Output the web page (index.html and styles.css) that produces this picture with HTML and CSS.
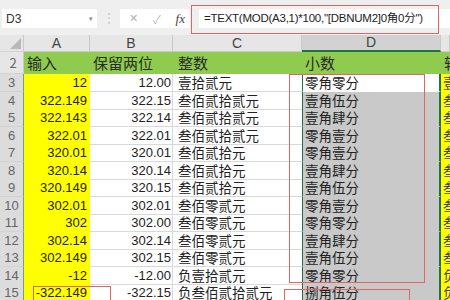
FILE: index.html
```html
<!DOCTYPE html>
<html lang="zh-CN">
<head>
    <meta charset="UTF-8">
    <title>TEXT DBNUM2</title>
    <link rel="stylesheet" href="styles.css">
</head>
<body>
    <div class="page">
        <!-- Formula bar -->
        <div class="toolbar">
            <div class="name-box">D3<span class="drop">&#9662;</span></div>
            <div class="grip">&#8942;</div>
            <div class="fx-box">
                <span class="fx-cancel">&#10005;</span>
                <span class="fx-ok">&#10003;</span>
                <span class="fx">fx</span>
            </div>
            <div class="formula">=TEXT(MOD(A3,1)*100,"[DBNUM2]0角0分")</div>
        </div>

        <!-- Grid -->
        <div class="sheet">
            <div class="row col-head">
                <div class="corner"><span class="corner-mark"></span></div>
                <div>A</div>
                <div>B</div>
                <div>C</div>
                <div class="picked">D</div>
                <div></div>
            </div>
            <div class="row title-row">
                <div>2</div>
                <div>输入</div>
                <div>保留两位</div>
                <div>整数</div>
                <div>小数</div>
                <div>转</div>
            </div>
            <div class="row data active">
                <div>3</div><div>12</div><div>12.00</div><div>壹拾贰元</div><div>零角零分</div><div>壹</div>
            </div>
            <div class="row data">
                <div>4</div><div>322.149</div><div>322.15</div><div>叁佰贰拾贰元</div><div>壹角伍分</div><div>叁</div>
            </div>
            <div class="row data">
                <div>5</div><div>322.143</div><div>322.14</div><div>叁佰贰拾贰元</div><div>壹角肆分</div><div>叁</div>
            </div>
            <div class="row data">
                <div>6</div><div>322.01</div><div>322.01</div><div>叁佰贰拾贰元</div><div>零角壹分</div><div>叁</div>
            </div>
            <div class="row data">
                <div>7</div><div>320.01</div><div>320.01</div><div>叁佰贰拾元</div><div>零角壹分</div><div>叁</div>
            </div>
            <div class="row data">
                <div>8</div><div>320.14</div><div>320.14</div><div>叁佰贰拾元</div><div>壹角肆分</div><div>叁</div>
            </div>
            <div class="row data">
                <div>9</div><div>320.149</div><div>320.15</div><div>叁佰贰拾元</div><div>壹角伍分</div><div>叁</div>
            </div>
            <div class="row data">
                <div>10</div><div>302.01</div><div>302.01</div><div>叁佰零贰元</div><div>零角壹分</div><div>叁</div>
            </div>
            <div class="row data">
                <div>11</div><div>302</div><div>302.00</div><div>叁佰零贰元</div><div>零角零分</div><div>叁</div>
            </div>
            <div class="row data">
                <div>12</div><div>302.14</div><div>302.14</div><div>叁佰零贰元</div><div>壹角肆分</div><div>叁</div>
            </div>
            <div class="row data">
                <div>13</div><div>302.149</div><div>302.15</div><div>叁佰零贰元</div><div>壹角伍分</div><div>叁</div>
            </div>
            <div class="row data">
                <div>14</div><div>-12</div><div>-12.00</div><div>负壹拾贰元</div><div>零角零分</div><div>负</div>
            </div>
            <div class="row data">
                <div>15</div><div>-322.149</div><div>-322.15</div><div>负叁佰贰拾贰元</div><div>捌角伍分</div><div>负</div>
            </div>
        </div>

        <!-- red annotation boxes drawn over the sheet -->
        <div class="mark mark-formula"></div>
        <div class="mark mark-decimal"></div>
        <div class="mark mark-last"></div>
        <div class="mark mark-input"></div>
    </div>
</body>
</html>
```

FILE: styles.css
```css
* {
    box-sizing: border-box;
}

body {
    margin: 0;
    background: #fff;
    font-family: "Liberation Sans", "Noto Sans CJK SC", sans-serif;
    color: #222;
}

.page {
    position: relative;
    width: 450px;
    height: 300px;
    overflow: hidden;
}

/* formula bar */
.toolbar {
    height: 35px;
    background: #efefef;
    display: flex;
    align-items: flex-start;
    padding-top: 9px;
}

.name-box {
    margin-left: 2px;
    width: 95px;
    height: 19px;
    background: #fff;
    display: flex;
    justify-content: space-between;
    align-items: center;
    padding: 0 4px 0 4px;
    font-size: 12px;
    color: #333;
}

.drop {
    font-size: 7px;
    color: #888;
}

.grip {
    width: 23px;
    height: 19px;
    text-align: center;
    line-height: 19px;
    font-size: 12px;
    color: #c4c4c4;
}

.fx-box {
    width: 70px;
    height: 19px;
    background: #fff;
    display: flex;
    align-items: center;
    justify-content: space-between;
    padding: 0 5px 0 9px;
}

.fx-cancel {
    font-size: 11px;
    color: #b0b0b0;
}

.fx-ok {
    font-size: 12px;
    color: #c0c0c0;
}

.fx {
    font-family: "Liberation Serif", serif;
    font-style: italic;
    font-size: 13px;
    color: #444;
}

.formula {
    flex: 1;
    margin-left: 9px;
    height: 19px;
    background: #fff;
    padding-left: 5px;
    font-size: 11.5px;
    letter-spacing: -0.25px;
    line-height: 19px;
    color: #222;
    white-space: nowrap;
}

/* sheet grid */
.row {
    display: grid;
    grid-template-columns: 24px 66px 83px 129px 139px 1fr;
    height: 17.5px;
}

.row > div {
    white-space: nowrap;
    border-right: 1px solid #d9d9d9;
    border-bottom: 1px solid #d9d9d9;
    font-size: 13px;
    line-height: 17px;
}

/* column letters */
.col-head {
    height: 17px;
    background: #e6e6e6;
}

.col-head > div {
    text-align: center;
    font-size: 14px;
    line-height: 16px;
    color: #444;
    border-right-color: #c9c9c9;
    border-bottom-color: #c9c9c9;
}

.col-head .picked {
    background: #d2d2d2;
    border-bottom: 2px solid #217346;
    line-height: 15px;
}

.corner {
    position: relative;
}

.corner-mark {
    position: absolute;
    right: 2px;
    bottom: 2px;
    width: 0;
    height: 0;
    border-left: 11px solid transparent;
    border-bottom: 11px solid #b8b8b8;
}

/* row numbers */
.row > div:first-child {
    background: #e6e6e6;
    text-align: center;
    color: #666;
    border-right-color: #c9c9c9;
    border-bottom-color: #d3d3d3;
    font-size: 13px;
}

.data > div:first-child {
    background: #dcdcdc;
    border-right: 1px solid #6fa47e;
}

/* header row */
.title-row {
    height: 22px;
}

.title-row > div {
    background: #8fcb4f;
    border-color: #8fcb4f;
    font-family: "Noto Sans CJK SC", sans-serif;
    font-size: 15px;
    line-height: 21px;
    padding-left: 3px;
    color: #2a2a2a;
}

.title-row > div:nth-child(4) {
    padding-left: 5px;
}

/* data columns */
.data > div:nth-child(2) {
    background: #ffff00;
    border-color: #ffff00;
    text-align: right;
    padding-right: 2px;
}

.data > div:nth-child(3) {
    text-align: right;
    padding-right: 1px;
}

.data > div:nth-child(4) {
    font-family: "Noto Sans CJK SC", sans-serif;
    font-size: 13.5px;
    padding-left: 5px;
    border-right: none;
}

.data > div:nth-child(5) {
    background: #c9c9c9;
    border-color: #c9c9c9;
    border-left: 1px solid #217346;
    border-right: 2px solid #217346;
    font-family: "Noto Sans CJK SC", sans-serif;
    font-size: 13.5px;
    padding-left: 2px;
}

.active > div:nth-child(5) {
    background: #fff;
    border-bottom-color: #fff;
}

.data > div:nth-child(6) {
    background: #ffff00;
    border-color: #ffff00;
    font-family: "Noto Sans CJK SC", sans-serif;
    font-size: 13.5px;
    padding-left: 2px;
    color: #444;
}

/* red annotation boxes */
.mark {
    position: absolute;
    border: 1px solid #e06666;
}

.mark-formula {
    left: 191px;
    top: 5px;
    width: 248px;
    height: 29px;
}

.mark-decimal {
    left: 289px;
    top: 74px;
    width: 136px;
    height: 209px;
}

.mark-last {
    left: 284px;
    top: 289px;
    width: 126px;
    height: 20px;
}

.mark-input {
    left: 33px;
    top: 286px;
    width: 78px;
    height: 20px;
}
```
